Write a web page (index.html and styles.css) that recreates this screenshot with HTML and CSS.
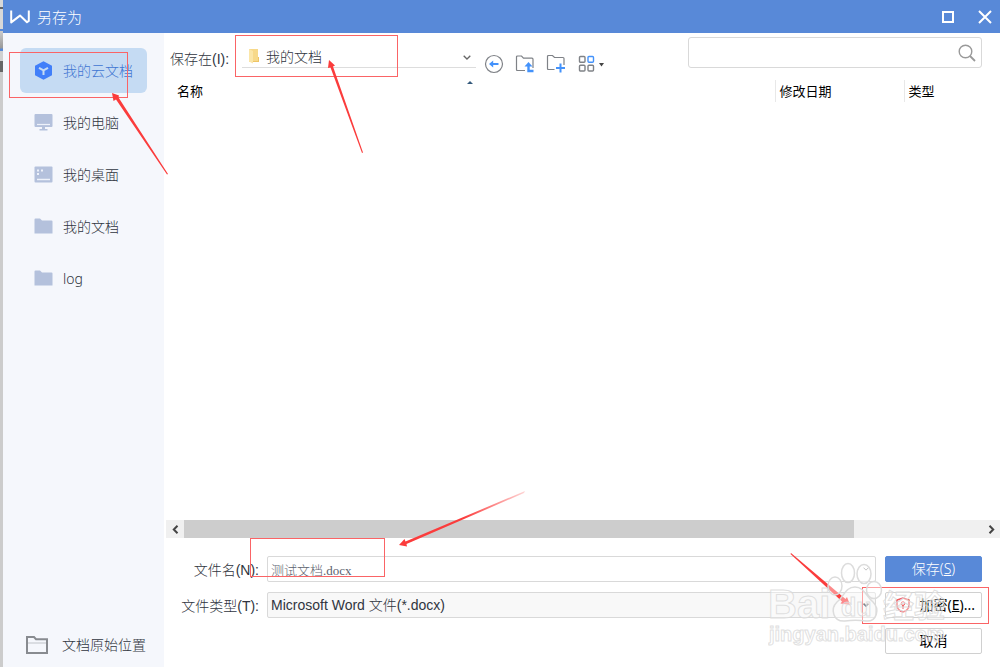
FILE: index.html
```
<!DOCTYPE html>
<html lang="zh-CN">
<head>
    <meta charset="UTF-8">
    <meta name="viewport" content="width=device-width, initial-scale=1.0">
    <title>另存为</title>
    <link rel="stylesheet" href="styles.css">
</head>
<body>
    <div class="dialog">
        <header class="titlebar">
            <svg class="logo" width="20" height="14" viewBox="0 0 20 14">
                <path d="M1.2 0.5V12.4L10 5.600L17 12.2L18.8 11V0.5" fill="none" stroke="#fff" stroke-width="2" stroke-linejoin="round"/>
            </svg>
            <h1>另存为</h1>
            <button type="button" class="window-button" aria-label="最大化">
                <svg width="12" height="12" viewBox="0 0 12 12"><rect x="1" y="1" width="10" height="10" fill="none" stroke="#fff" stroke-width="2"/></svg>
            </button>
            <button type="button" class="window-button" aria-label="关闭">
                <svg width="14" height="14" viewBox="0 0 14 14"><path d="M1 1L13 13M13 1L1 13" stroke="#fff" stroke-width="2"/></svg>
            </button>
        </header>

        <div class="content">
            <nav class="sidebar">
                <a href="#" class="place active">
                    <svg width="19" height="19" viewBox="0 0 19 19">
                        <path d="M9.5 0.3L18 4.8V14.2L9.5 18.7L1 14.2V4.8Z" fill="#417ff9"/>
                        <path d="M5 6.8L9.5 9.4L14 6.8M9.5 9.4V14" fill="none" stroke="#c5dbf3" stroke-width="2"/>
                    </svg>
                    我的云文档
                </a>
                <a href="#" class="place">
                    <svg width="19" height="19" viewBox="0 0 19 19">
                        <rect x="0.5" y="1" width="18" height="13" rx="1" fill="#b4c1dc"/>
                        <path d="M3 11.5H16" stroke="#eef2fa" stroke-width="1.2"/>
                        <path d="M8 14H11V16H13.5V17.5H5.5V16H8Z" fill="#b4c1dc"/>
                    </svg>
                    我的电脑
                </a>
                <a href="#" class="place">
                    <svg width="19" height="19" viewBox="0 0 19 19">
                        <rect x="0.5" y="1.5" width="18" height="16" rx="1" fill="#b4c1dc"/>
                        <path d="M3 14.5H16" stroke="#eef2fa" stroke-width="1.5"/>
                        <path d="M3 4.5H5V6.5H3ZM7 4.5H9V6.5H7ZM3 8H5V10H3Z" fill="#eef2fa"/>
                    </svg>
                    我的桌面
                </a>
                <a href="#" class="place">
                    <svg width="19" height="19" viewBox="0 0 19 19"><path d="M0.5 2.5Q0.5 1.5 1.5 1.5H6L8 3.5H17.5Q18.5 3.5 18.5 4.5V16.5H0.5Z" fill="#b4c1dc"/></svg>
                    我的文档
                </a>
                <a href="#" class="place">
                    <svg width="19" height="19" viewBox="0 0 19 19"><path d="M0.5 2.5Q0.5 1.5 1.5 1.5H6L8 3.5H17.5Q18.5 3.5 18.5 4.5V16.5H0.5Z" fill="#b4c1dc"/></svg>
                    log
                </a>
                <a href="#" class="place original">
                    <svg width="24" height="20" viewBox="0 0 24 20">
                        <path d="M2 2H9L11 4.2H22V18H2Z" fill="none" stroke="#888b90" stroke-width="2"/>
                        <path d="M3 8H21" stroke="#c9cbd0" stroke-width="1.2"/>
                    </svg>
                    文档原始位置
                </a>
            </nav>

            <main class="main">
                <div class="toolbar">
                    <label for="location">保存在(I):</label>
                    <div class="location">
                        <svg class="folder" width="12" height="16" viewBox="0 0 12 16">
                            <path d="M1 1H10V14H1Z" fill="#f7d98a"/>
                            <path d="M1 1L5 3V15.5L1 13.5Z" fill="#fbe6a8"/>
                            <path d="M10 9H11V14H5V13H10Z" fill="#eec566"/>
                        </svg>
                        <select id="location">
                            <option>我的文档</option>
                        </select>
                        <svg class="chevron" width="8" height="5" viewBox="0 0 8 5"><path d="M0.7 0.7L4 4L7.3 0.7" fill="none" stroke="#666" stroke-width="1.3"/></svg>
                    </div>
                    <div class="tools">
                        <button type="button" aria-label="后退">
                            <svg width="20" height="20" viewBox="0 0 20 20">
                                <circle cx="10" cy="10" r="8.5" fill="none" stroke="#7f8287" stroke-width="1.2"/>
                                <path d="M6.5 10H14.5" stroke="#4392fb" stroke-width="2"/>
                                <path d="M5 10L9.2 6.6V13.4Z" fill="#4392fb"/>
                            </svg>
                        </button>
                        <button type="button" aria-label="向上一级">
                            <svg width="20" height="20" viewBox="0 0 20 20">
                                <path d="M10 16.5H2.5Q1.5 16.5 1.5 15.5V3Q1.5 2 2.5 2H6.5L8.5 4.2H17Q18 4.2 18 5.2V14" fill="none" stroke="#7f8287" stroke-width="1.2"/>
                                <path d="M13.5 10V17H18.5" fill="none" stroke="#4392fb" stroke-width="2.4"/>
                                <path d="M13.5 8L17.5 12.5H9.5Z" fill="#4392fb"/>
                            </svg>
                        </button>
                        <button type="button" aria-label="新建文件夹">
                            <svg width="20" height="20" viewBox="0 0 20 20">
                                <path d="M8.5 15.5H2.5Q1.5 15.5 1.5 14.5V2.5Q1.5 1.5 2.5 1.5H6.5L8.5 3.5H17Q18 3.5 18 4.5V11" fill="none" stroke="#7f8287" stroke-width="1.2"/>
                                <path d="M10 14H19M14.5 9.5V18.5" stroke="#4392fb" stroke-width="2"/>
                            </svg>
                        </button>
                        <button type="button" class="view" aria-label="视图">
                            <svg width="28" height="20" viewBox="0 0 28 20">
                                <g fill="none" stroke="#7f8287" stroke-width="1.4">
                                    <rect x="2.5" y="2.5" width="5.5" height="5.8" rx="1"/>
                                    <rect x="11" y="2.5" width="5.5" height="5.8" rx="1" stroke="#4392fb"/>
                                    <rect x="2.5" y="11.2" width="5.5" height="5.8" rx="1"/>
                                    <rect x="11" y="11.2" width="5.5" height="5.8" rx="1"/>
                                </g>
                                <path d="M22 9H27L24.5 12.5Z" fill="#444"/>
                            </svg>
                        </button>
                    </div>
                    <div class="search">
                        <input type="search" aria-label="搜索">
                        <svg width="18" height="18" viewBox="0 0 18 18">
                            <circle cx="7.5" cy="7.5" r="6.3" fill="none" stroke="#999" stroke-width="1.4"/>
                            <path d="M12 12L17 17" stroke="#999" stroke-width="1.8"/>
                        </svg>
                    </div>
                </div>

                <div class="files">
                    <table>
                        <thead>
                            <tr>
                                <th class="name">名称
                                    <svg class="sort" width="6" height="3" viewBox="0 0 6 3"><path d="M3 0L6 3H0Z" fill="#345a7c"/></svg>
                                </th>
                                <th class="date">修改日期</th>
                                <th class="type">类型</th>
                            </tr>
                        </thead>
                        <tbody></tbody>
                    </table>
                </div>

                <div class="scrollbar">
                    <button type="button" aria-label="向左滚动">
                        <svg width="7" height="9" viewBox="0 0 7 9"><path d="M5.5 0.8L1.8 4.5L5.5 8.2" fill="none" stroke="#444" stroke-width="2"/></svg>
                    </button>
                    <div class="track"><div class="thumb"></div></div>
                    <button type="button" aria-label="向右滚动">
                        <svg width="7" height="9" viewBox="0 0 7 9"><path d="M1.5 0.8L5.2 4.5L1.5 8.2" fill="none" stroke="#444" stroke-width="2"/></svg>
                    </button>
                </div>

                <form class="save-form">
                    <label for="filename">文件名(N):</label>
                    <div class="field">
                        <input type="text" id="filename" value="测试文档.docx">
                        <svg class="chevron" width="6" height="4" viewBox="0 0 8 5"><path d="M0.7 0.7L4 4L7.3 0.7" fill="none" stroke="#999" stroke-width="1.3"/></svg>
                    </div>
                    <button type="button" class="primary">保存(<u>S</u>)</button>

                    <label for="filetype">文件类型(T):</label>
                    <div class="field">
                        <select id="filetype">
                            <option>Microsoft Word 文件(*.docx)</option>
                        </select>
                        <svg class="chevron" width="6" height="4" viewBox="0 0 8 5"><path d="M0.7 0.7L4 4L7.3 0.7" fill="none" stroke="#333" stroke-width="2"/></svg>
                    </div>
                    <button type="button" class="encrypt">
                        <svg width="14" height="16" viewBox="0 0 14 16">
                            <path d="M7 1L13 3V8Q13 13 7 15Q1 13 1 8V3Z" fill="none" stroke="#f0595c" stroke-width="1.5"/>
                            <circle cx="7" cy="6.5" r="1.8" fill="none" stroke="#f0595c"/>
                            <path d="M7 8V12" stroke="#f0595c" stroke-width="1.5"/>
                        </svg>
                        加密(<u>E</u>)...
                    </button>
                    <button type="button" class="cancel">取消</button>
                </form>
            </main>
        </div>
    </div>

    <!-- red boxes and arrows -->
    <svg class="marks" width="1000" height="667" viewBox="0 0 1000 667">
        <defs>
            <linearGradient id="fade" gradientUnits="userSpaceOnUse" x1="400" y1="545" x2="526" y2="491">
                <stop offset="0.5" stop-color="#fb3c3c"/>
                <stop offset="1" stop-color="#fb3c3c" stop-opacity="0.2"/>
            </linearGradient>
        </defs>
        <g fill="none" stroke="#fa6466" stroke-width="1">
            <rect x="9.5" y="52.5" width="118" height="45"/>
            <rect x="235.5" y="35.5" width="162" height="41"/>
            <rect x="250.5" y="538.5" width="134" height="38"/>
            <rect x="862.5" y="587.5" width="126" height="36"/>
        </g>
        <g fill="#fb3c3c">
            <path d="M112 93L119 95.5L118.5 97.5L168 174L167 174.5L116 99.5L113.500 101Z"/>
            <path d="M329 60L335 65.5L333 66.5L363 152.5L362 153L330.5 67.5L328 68Z"/>
            <path d="M399 545L404.5 539L405.5 541.5L525 491L524 493L406.5 544L407 546.5Z" fill="url(#fade)"/>
            <path d="M850 605L847 597L845.5 599L791 553L790.5 554L842 601.5L840.5 603.5Z"/>
        </g>
    </svg>

    <div class="watermark">
        <svg width="190" height="96" viewBox="0 0 190 96">
            <g fill="#fff" fill-opacity="0.4" stroke="#dcdcdc" stroke-width="1.5">
                <ellipse cx="67" cy="26" rx="7" ry="9"/>
                <ellipse cx="80" cy="13" rx="6.5" ry="9.5"/>
                <ellipse cx="96" cy="14" rx="7" ry="9.5"/>
                <ellipse cx="106" cy="30" rx="7.5" ry="8.5"/>
                <path d="M87 27C96 27 98 36 105 42C112 49 109 62 98 61C91 60 84 60 77 61C65 62 62 49 69 42C76 37 77 27 87 27Z"/>
            </g>
            <text class="big" x="0" y="58">Bai</text>
            <text class="du" x="73" y="56">du</text>
            <text class="cn" x="115" y="57">经验</text>
            <text class="site" x="1" y="81">jingyan.baidu.com</text>
        </svg>
    </div>
</body>
</html>
```
FILE: styles.css
```
* {
    box-sizing: border-box;
}

body {
    margin: 0;
    padding-left: 3px;
    font-family: "Noto Sans", "Noto Sans CJK SC", sans-serif;
    font-size: 14px;
    line-height: 20px;
    color: #303540;
    background: linear-gradient(#d8d8d8 7px, #666 7px, #666 9px, #d8d8d8 9px, #d8d8d8 29px, #5889d8 29px, #5889d8 31px, #ccc 31px, #999 48px, #5889d8 49px, #5889d8 51px, #d0d0d0 51px, #d0d0d0 61px, #666 61px, #666 72px, #ccc 72px);
}

button,
input,
select {
    margin: 0;
    font: inherit;
    color: inherit;
}

button {
    padding: 0;
    border: none;
    background: none;
    cursor: pointer;
}

svg {
    flex: none;
}

.dialog {
    display: flex;
    flex-direction: column;
    min-height: 100vh;
    background: #fff;
}

/* title bar */
.titlebar {
    display: flex;
    align-items: center;
    height: 33px;
    padding: 0 8px 0 7px;
    background: #5889d8;
    color: #fff;
}

.titlebar h1 {
    flex: 1;
    margin: 0 0 0 7px;
    font-size: 15px;
    font-weight: 300;
}

.window-button {
    display: flex;
    margin-left: 24px;
}

.content {
    display: flex;
    flex: 1;
}

/* sidebar */
.sidebar {
    display: flex;
    flex-direction: column;
    gap: 7px;
    width: 161px;
    padding: 15px 17px 0;
    background: #f5f7fc;
}

.place {
    display: flex;
    align-items: center;
    gap: 10px;
    height: 45px;
    padding-left: 14px;
    border-radius: 6px;
    color: #303540;
    font-weight: 300;
    text-decoration: none;
    white-space: nowrap;
}

.place.active {
    background: #c5dbf3;
    color: #3f76d2;
}

.place.original {
    gap: 13px;
    margin-top: auto;
    padding-left: 5px;
}

/* location row */
.main {
    display: flex;
    flex-direction: column;
    flex: 1;
    min-width: 0;
    padding-left: 2px;
}

.toolbar {
    display: flex;
    align-items: flex-start;
    height: 47px;
    padding: 4px 18px 0 4px;
    font-family: "Liberation Sans", "Noto Sans CJK SC", sans-serif;
    font-weight: 300;
}

.toolbar label {
    width: 72px;
    padding-top: 12px;
}

.location {
    position: relative;
    width: 234px;
    padding-top: 10px;
}

.location select {
    display: block;
    appearance: none;
    width: 100%;
    height: 21px;
    padding: 0 0 0 24px;
    border: none;
    border-bottom: 1px solid #ddd;
    border-radius: 0;
    background: none;
}

.folder {
    position: absolute;
    left: 6px;
    top: 11px;
}

.location .chevron {
    position: absolute;
    right: 5px;
    top: 18px;
}

.tools {
    display: flex;
    margin-left: 2px;
    padding-top: 12px;
}

.tools button {
    display: flex;
    align-items: center;
    justify-content: center;
    width: 31px;
    height: 30px;
}

.tools .view {
    justify-content: flex-start;
    width: 36px;
    padding-left: 6px;
}

.search {
    position: relative;
    width: 294px;
    margin-left: auto;
}

.search input {
    display: block;
    appearance: none;
    width: 100%;
    height: 31px;
    padding: 0 32px 0 8px;
    border: 1px solid #d9d9d9;
    border-radius: 3px;
    background: #fff;
}

.search svg {
    position: absolute;
    right: 6px;
    top: 7px;
}

/* file list */
.files {
    flex: 1;
}

.files table {
    width: 100%;
    table-layout: fixed;
    border-collapse: collapse;
}

.files th {
    position: relative;
    height: 22px;
    padding: 0 4px;
    border-left: 1px solid #e8e8e8;
    color: #000;
    font-size: 13px;
    font-weight: 400;
    text-align: left;
}

.files .name {
    padding-left: 11px;
    border-left: none;
}

.files .date {
    width: 129px;
}

.files .type {
    width: 96px;
}

.sort {
    position: absolute;
    left: 50%;
    top: 1px;
    margin-left: -3px;
}

.scrollbar {
    display: flex;
    height: 18px;
    background: #f0f0f0;
}

.scrollbar button {
    width: 18px;
    line-height: 9px;
}

.track {
    flex: 1;
}

.thumb {
    width: 84%;
    height: 100%;
    background: #cdcdcd;
}

/* file name, type and buttons */
.save-form {
    display: grid;
    grid-template-columns: 93px 1fr 97px;
    grid-auto-rows: 26px;
    row-gap: 10px;
    padding: 18px 18px 13px 0;
    font-family: "Liberation Sans", "Noto Sans CJK SC", sans-serif;
    font-weight: 300;
}

.save-form label {
    line-height: 28px;
    text-align: right;
    white-space: nowrap;
}

.field {
    position: relative;
    margin: 0 9px 0 8px;
}

.field input,
.field select {
    display: block;
    appearance: none;
    width: 100%;
    height: 26px;
    padding: 0 20px 0 3px;
    border: 1px solid #d9d9d9;
    border-radius: 2px;
    background: #fff;
}

.field input {
    color: #5c626e;
    font-family: "Liberation Serif", "Noto Sans CJK SC", serif;
    font-size: 13px;
}

.field select {
    background: #f8f8f8;
}

.field .chevron {
    position: absolute;
    right: 7px;
    top: 11px;
}

.save-form button {
    display: flex;
    align-items: center;
    justify-content: center;
    border: 1px solid #d0d0d0;
    border-radius: 2px;
    background: #fff;
    color: #000;
    font-family: "Noto Sans", "Noto Sans CJK SC", sans-serif;
    font-weight: 400;
}

.save-form .primary {
    border-color: #5889d8;
    background: #5889d8;
    color: #fff;
    font-weight: 300;
}

.save-form .encrypt {
    justify-content: flex-end;
    padding-right: 6px;
}

.encrypt svg {
    margin-right: 10px;
}

.save-form .cancel {
    grid-column: 3;
}

/* laid over the dialog */
.marks {
    position: absolute;
    left: 0;
    top: 0;
    pointer-events: none;
}

.watermark {
    position: absolute;
    right: 42px;
    bottom: 11px;
    height: 96px;
    pointer-events: none;
}

.watermark text {
    fill: #fff;
    fill-opacity: 0.4;
    stroke: #d8d8d8;
    stroke-opacity: 0.8;
    stroke-width: 1px;
    font-family: "Liberation Sans", "Noto Sans CJK SC", sans-serif;
    font-weight: 700;
}

.watermark .big {
    font-size: 40px;
}

.watermark .du {
    font-size: 25px;
}

.watermark .cn {
    font-size: 31px;
}

.watermark .site {
    font-size: 20px;
}
```
